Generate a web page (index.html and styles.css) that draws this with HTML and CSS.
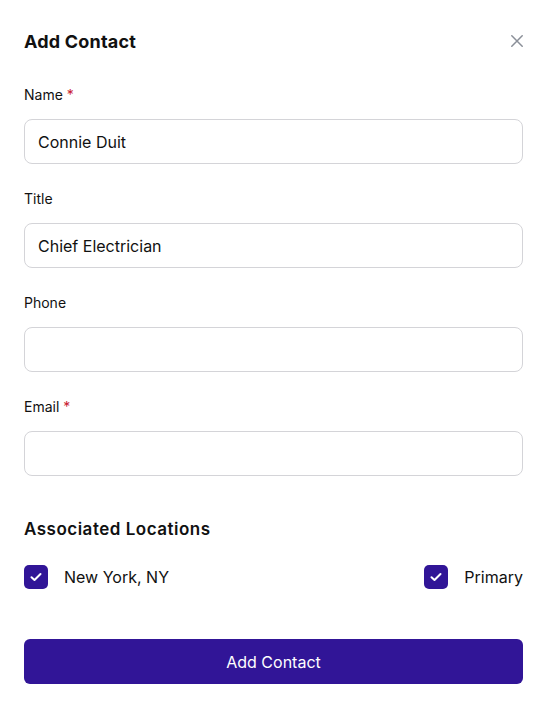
FILE: index.html
```html
<!DOCTYPE html>
<html lang="en">
<head>
  <meta charset="UTF-8" />
  <meta name="viewport" content="width=device-width, initial-scale=1.0"/>
  <title>Add Contact</title>
  <link rel="stylesheet" href="styles.css">
</head>
<body>

<div class="modal">
  <div class="modal-header">
    <h2>Add Contact</h2>
    <button class="close" type="button" aria-label="Close">
      <svg width="12" height="12" viewBox="0 0 12 12">
        <path d="M0.8 0.8L11.2 11.2M11.2 0.8L0.8 11.2" stroke="#8a8f98" stroke-width="1.5" stroke-linecap="round"/>
      </svg>
    </button>
  </div>

  <form class="contact-form">
    <div class="form-group">
      <label>Name <span class="req">*</span></label>
      <input type="text" value="Connie Duit">
    </div>

    <div class="form-group">
      <label>Title</label>
      <input type="text" value="Chief Electrician">
    </div>

    <div class="form-group">
      <label>Phone</label>
      <input type="text">
    </div>

    <div class="form-group">
      <label>Email <span class="req">*</span></label>
      <input type="email">
    </div>

    <h3>Associated Locations</h3>

    <div class="location-row">
      <label class="check">
        <span class="box">
          <svg width="12" height="10" viewBox="0 0 12 10"><path d="M1.5 5.2L4.5 8L10.5 2" fill="none" stroke="#fff" stroke-width="2" stroke-linecap="round" stroke-linejoin="round"/></svg>
        </span>
        New York, NY
      </label>
      <label class="check">
        <span class="box">
          <svg width="12" height="10" viewBox="0 0 12 10"><path d="M1.5 5.2L4.5 8L10.5 2" fill="none" stroke="#fff" stroke-width="2" stroke-linecap="round" stroke-linejoin="round"/></svg>
        </span>
        Primary
      </label>
    </div>

    <button class="btn" type="button">Add Contact</button>
  </form>
</div>

</body>
</html>
```

FILE: styles.css
```css
* {
  margin: 0;
  padding: 0;
  box-sizing: border-box;
}

body {
  font-family: Inter, 'Noto Sans', sans-serif;
  background: #ffffff;
  color: #111;
}

.modal {
  width: 547px;
  min-height: 706px;
  padding: 24px 24px 0;
  background: #fff;
}

.modal-header {
  display: flex;
  justify-content: space-between;
  align-items: center;
  height: 34px;
  margin-bottom: 27px;
}

h2 {
  font-size: 18px;
  font-weight: 700;
  letter-spacing: 0.2px;
  color: #111;
}

.close {
  background: none;
  border: none;
  width: 12px;
  height: 12px;
  margin-right: 0;
  display: flex;
  cursor: pointer;
}

.form-group {
  margin-bottom: 25px;
}

.form-group label {
  display: block;
  font-size: 14px;
  line-height: 20px;
  margin-bottom: 14px;
  color: #111;
}

.req {
  color: #c8202f;
}

input {
  width: 100%;
  height: 45px;
  padding: 0 13px;
  border: 1px solid #d4d4d8;
  border-radius: 8px;
  font-family: Inter, 'Noto Sans', sans-serif;
  font-size: 16px;
  color: #111;
  outline: none;
}

h3 {
  font-size: 17px;
  font-weight: 600;
  letter-spacing: 0.5px;
  line-height: 24px;
  margin-top: 41px;
  margin-bottom: 24px;
}

.location-row {
  display: flex;
  justify-content: space-between;
  align-items: center;
  margin-bottom: 50px;
}

.check {
  display: flex;
  align-items: center;
  gap: 16px;
  font-size: 16px;
  color: #111;
}

.box {
  width: 24px;
  height: 24px;
  border-radius: 5px;
  background: #311597;
  display: flex;
  align-items: center;
  justify-content: center;
}

.btn {
  width: 100%;
  height: 45px;
  border: none;
  border-radius: 6px;
  background: #311597;
  color: #fff;
  font-family: Inter, 'Noto Sans', sans-serif;
  font-size: 16px;
  cursor: pointer;
}
```
